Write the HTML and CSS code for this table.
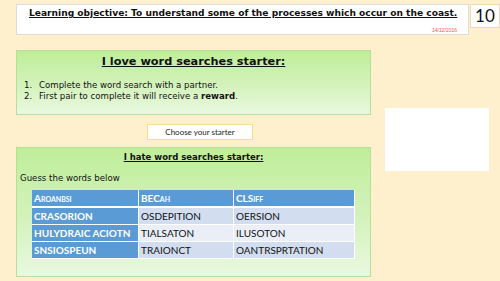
FILE: index.html
```html
<!DOCTYPE html>
<html>
<head>
<meta charset="utf-8">
<link rel="stylesheet" href="styles.css">
</head>
<body>
<div class="top">
  <div class="title">
    <div class="objective">Learning objective: To understand some of the processes which occur on the coast.</div>
    <div class="date">14/12/2016</div>
  </div>
  <div class="num">10</div>
</div>
<div class="main">
  <div class="left">
    <div class="green g1">
      <h2 class="h-love">I love word searches starter:</h2>
      <ol class="steps">
        <li>Complete the word search with a partner.</li>
        <li>First pair to complete it will receive a <b>reward</b>.</li>
      </ol>
    </div>
    <div class="btn">Choose your starter</div>
    <div class="green g2">
      <h3 class="h-hate">I hate word searches starter:</h3>
      <p class="guess">Guess the words below</p>
      <table class="words">
        <tr class="head"><th class="c1">Aroanbsi</th><th class="c2">BECah</th><th class="c3">CLSiff</th></tr>
        <tr class="odd"><td class="c1">CRASORION</td><td>OSDEPITION</td><td>OERSION</td></tr>
        <tr class="even"><td class="c1">HULYDRAIC ACIOTN</td><td>TIALSATON</td><td>ILUSOTON</td></tr>
        <tr class="odd"><td class="c1">SNSIOSPEUN</td><td>TRAIONCT</td><td>OANTRSPRTATION</td></tr>
      </table>
    </div>
  </div>
  <div class="whitebox"></div>
</div>
</body>
</html>
```
FILE: styles.css
```css
html, body {
  margin: 0;
  padding: 0;
}
body {
  width: 500px;
  height: 281px;
  overflow: hidden;
  background: #FEF0CD;
  font-family: "DejaVu Sans", sans-serif;
  padding-top: 4px;
  box-sizing: border-box;
}
.top {
  display: flex;
  align-items: flex-start;
  padding-left: 16px;
  gap: 1px;
}
.title {
  width: 454px;
  height: 31px;
  box-sizing: border-box;
  background: #fff;
  border: 1px solid #dcdcdc;
  padding: 2px 0 0 12px;
  overflow: hidden;
}
.objective {
  font-size: 9.1px;
  font-weight: bold;
  text-decoration: underline;
  color: #111;
  line-height: 13px;
  white-space: nowrap;
}
.date {
  font-family: "Liberation Sans", sans-serif;
  color: #FF5050;
  font-size: 5px;
  text-align: right;
  padding-right: 11px;
  margin-top: 7px;
  line-height: 6px;
}
.num {
  width: 30px;
  height: 24px;
  box-sizing: border-box;
  background: #fff;
  border: 1px solid #F2D9AC;
  font-family: "Lato", sans-serif;
  font-size: 17px;
  line-height: 22px;
  padding-left: 4px;
  color: #111;
}
.main {
  display: flex;
  align-items: flex-start;
  padding-left: 16px;
  margin-top: 15px;
}
.left {
  width: 355px;
  display: flex;
  flex-direction: column;
}
.green {
  box-sizing: border-box;
  border: 1px solid #B9DE9A;
  background: linear-gradient(to bottom, #BFEE99 0%, #D4F2BC 55%, #E9F8DF 100%);
}
.g1 {
  height: 65px;
}
.h-love {
  margin: 0;
  text-align: center;
  font-size: 11.3px;
  font-weight: bold;
  text-decoration: underline;
  color: #111;
  line-height: 16px;
  padding-top: 3px;
}
.steps {
  margin: 10px 0 0 0;
  padding-left: 18px;
  font-size: 8.6px;
  line-height: 11px;
  color: #111;
}
.steps li {
  padding-left: 4px;
}
.btn {
  margin: 9px 0 0 131px;
  width: 106px;
  height: 16px;
  box-sizing: border-box;
  background: #fff;
  border: 1px solid #F6DD8C;
  font-family: "Lato", sans-serif;
  font-size: 8px;
  line-height: 14px;
  text-align: center;
  color: #222;
}
.g2 {
  margin-top: 7px;
  height: 130px;
  padding-left: 15px;
}
.h-hate {
  margin: 0;
  text-align: center;
  font-size: 8.5px;
  font-weight: bold;
  text-decoration: underline;
  color: #111;
  line-height: 12px;
  padding-top: 3px;
  padding-right: 15px;
}
.guess {
  margin: 9px 0 0 -12px;
  font-size: 8.6px;
  line-height: 12px;
  color: #111;
}
.words {
  margin-top: 6px;
  border-collapse: collapse;
  font-family: "Lato", sans-serif;
  font-size: 10px;
}
.words th, .words td {
  height: 16px;
  padding: 0 0 0 2px;
  text-align: left;
  border: 1px solid #fff;
  border-width: 0 1px 1px 0;
  line-height: 15px;
  white-space: nowrap;
}
.words th {
  font-variant: small-caps;
  font-weight: bold;
  color: #fff;
  background: #5B9BD5;
  border-bottom-width: 2px;
}
.words .c1 { width: 104px; }
.words .c2 { width: 92px; }
.words .c3 { width: 118px; }
.words td.c1 {
  background: #5B9BD5;
  color: #fff;
  font-weight: bold;
}
.words tr.odd td { background: #D2DEEF; color: #111; }
.words tr.even td { background: #EAEFF7; color: #111; }
.words tr td.c1 { background: #5B9BD5; color: #fff; }
.whitebox {
  margin: 58px 0 0 14px;
  width: 104px;
  height: 63px;
  background: #fff;
}
```
